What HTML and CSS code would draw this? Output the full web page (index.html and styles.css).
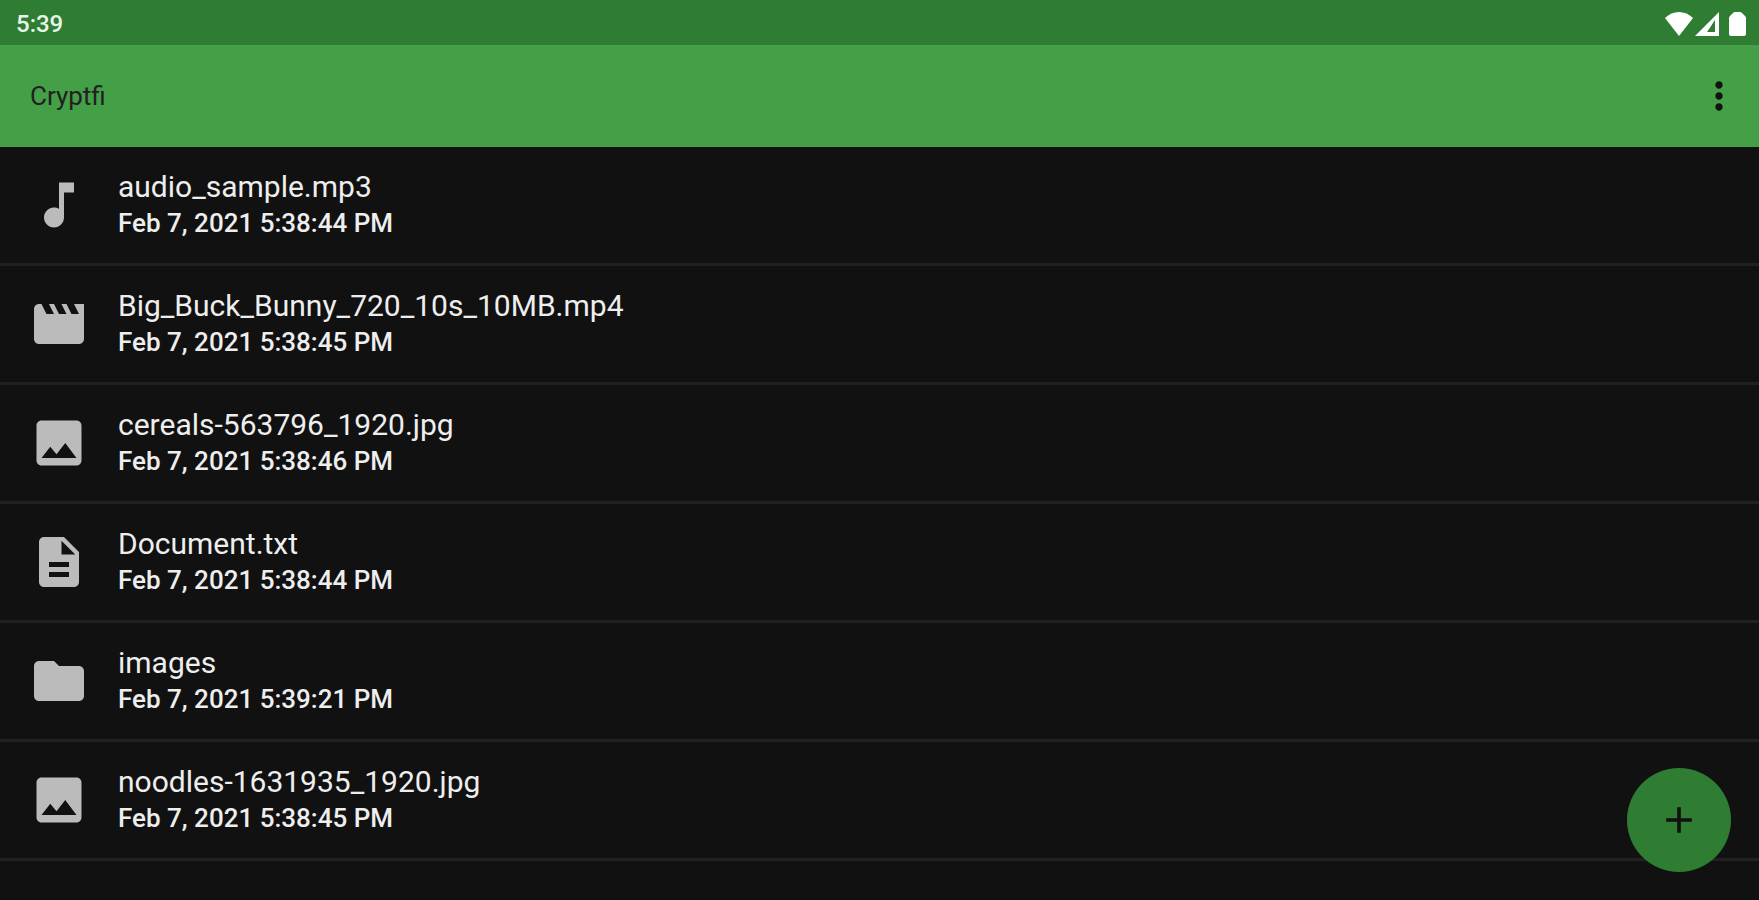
FILE: index.html
```html
<!DOCTYPE html>
<html lang="en">
<head>
    <meta charset="UTF-8">
    <meta name="viewport" content="width=device-width, initial-scale=1.0">
    <title>Cryptfi</title>
    <link rel="stylesheet" href="styles.css">
</head>
<body>
    <div class="status-bar">
        <span class="clock">5:39</span>
        <div class="status-icons">
            <svg class="wifi" viewBox="0 0 28 24"><path d="M14 24 0 6C8-2 20-2 28 6z"/></svg>
            <svg class="signal" viewBox="0 0 24 24"><path fill-rule="evenodd" d="M24 0v24H0zM20 8l-8 12h8z"/></svg>
            <svg class="battery" viewBox="0 0 17 24"><path d="M6 0h5q1 0 2 1l3 3q1 1 1 2v16q0 2-2 2H2q-2 0-2-2V6q0-1 1-2l3-3q1-1 2-1z"/></svg>
        </div>
    </div>

    <header class="app-bar">
        <h1>Cryptfi</h1>
        <button type="button" class="menu-button" aria-label="More options">
            <svg viewBox="0 0 24 24"><path d="M12 8c1.1 0 2-.9 2-2s-.9-2-2-2-2 .9-2 2 .9 2 2 2zm0 2c-1.1 0-2 .9-2 2s.9 2 2 2 2-.9 2-2-.9-2-2-2zm0 6c-1.1 0-2 .9-2 2s.9 2 2 2 2-.9 2-2-.9-2-2-2z"/></svg>
        </button>
    </header>

    <ul class="file-list">
        <li>
            <svg viewBox="0 0 24 24"><path d="M12 3v10.55c-.59-.34-1.27-.55-2-.55-2.21 0-4 1.79-4 4s1.79 4 4 4 4-1.79 4-4V7h4V3h-6z"/></svg>
            <div class="file-info">
                <span class="file-name">audio_sample.mp3</span>
                <span class="file-date">Feb 7, 2021 5:38:44 PM</span>
            </div>
        </li>
        <li>
            <svg viewBox="0 0 24 24"><path d="M18 4l2 4h-3l-2-4h-2l2 4h-3l-2-4H8l2 4H7L5 4H4c-1.1 0-1.99.9-1.99 2L2 18c0 1.1.9 2 2 2h16c1.1 0 2-.9 2-2V4h-4z"/></svg>
            <div class="file-info">
                <span class="file-name">Big_Buck_Bunny_720_10s_10MB.mp4</span>
                <span class="file-date">Feb 7, 2021 5:38:45 PM</span>
            </div>
        </li>
        <li>
            <svg viewBox="0 0 24 24"><path d="M21 19V5c0-1.1-.9-2-2-2H5c-1.1 0-2 .9-2 2v14c0 1.1.9 2 2 2h14c1.1 0 2-.9 2-2zM8.5 13.5l2.5 3.01L14.5 12l4.5 6H5l3.5-4.5z"/></svg>
            <div class="file-info">
                <span class="file-name">cereals-563796_1920.jpg</span>
                <span class="file-date">Feb 7, 2021 5:38:46 PM</span>
            </div>
        </li>
        <li>
            <svg viewBox="0 0 24 24"><path d="M14 2H6c-1.1 0-1.99.9-1.99 2L4 20c0 1.1.89 2 1.99 2H18c1.1 0 2-.9 2-2V8l-6-6zm2 16H8v-2h8v2zm0-4H8v-2h8v2zm-3-5V3.5L18.5 9H13z"/></svg>
            <div class="file-info">
                <span class="file-name">Document.txt</span>
                <span class="file-date">Feb 7, 2021 5:38:44 PM</span>
            </div>
        </li>
        <li>
            <svg viewBox="0 0 24 24"><path d="M10 4H4c-1.1 0-1.99.9-1.99 2L2 18c0 1.1.9 2 2 2h16c1.1 0 2-.9 2-2V8c0-1.1-.9-2-2-2h-8l-2-2z"/></svg>
            <div class="file-info">
                <span class="file-name">images</span>
                <span class="file-date">Feb 7, 2021 5:39:21 PM</span>
            </div>
        </li>
        <li>
            <svg viewBox="0 0 24 24"><path d="M21 19V5c0-1.1-.9-2-2-2H5c-1.1 0-2 .9-2 2v14c0 1.1.9 2 2 2h14c1.1 0 2-.9 2-2zM8.5 13.5l2.5 3.01L14.5 12l4.5 6H5l3.5-4.5z"/></svg>
            <div class="file-info">
                <span class="file-name">noodles-1631935_1920.jpg</span>
                <span class="file-date">Feb 7, 2021 5:38:45 PM</span>
            </div>
        </li>
    </ul>

    <button type="button" class="add-button" aria-label="Add file">
        <svg viewBox="0 0 24 24"><path d="M19 13h-6v6h-2v-6H5v-2h6V5h2v6h6v2z"/></svg>
    </button>
</body>
</html>
```
FILE: styles.css
```css
* {
    box-sizing: border-box;
}

body {
    margin: 0;
    font-family: Roboto, sans-serif;
    background-color: #111;
    color: #eee;
}

.status-bar {
    display: flex;
    justify-content: space-between;
    align-items: center;
    height: 45px;
    padding: 2px 13px 0 16px;
    background-color: #2e7d32;
    color: #e8f5e9;
}

.clock {
    font-size: 24px;
    font-weight: 500;
}

.status-icons {
    display: flex;
    fill: #fff;
}

.status-icons svg {
    height: 24px;
}

.wifi {
    width: 28px;
}

.signal {
    width: 24px;
    margin: 0 10px 0 2px;
}

.battery {
    width: 17px;
}

.app-bar {
    display: flex;
    justify-content: space-between;
    align-items: center;
    height: 102px;
    padding: 0 18px 0 30px;
    background-color: #43a047;
    color: #212121;
}

.app-bar h1 {
    margin: 0;
    font-size: 26px;
    font-weight: 400;
}

button {
    display: flex;
    justify-content: center;
    align-items: center;
    padding: 0;
    border: none;
    cursor: pointer;
}

button svg {
    width: 44px;
    height: 44px;
    fill: #111;
}

.menu-button {
    background: none;
}

.file-list {
    list-style-type: none;
    margin: 0;
    padding: 0;
}

.file-list li {
    display: flex;
    align-items: center;
    gap: 29px;
    height: 119px;
    padding: 0 29px;
    border-bottom: 3px solid #212121;
}

.file-list svg {
    width: 60px;
    height: 60px;
    fill: #bbb;
}

.file-info {
    display: flex;
    flex-direction: column;
    line-height: 36px;
}

.file-name {
    font-size: 30px;
}

.file-date {
    font-size: 26px;
    font-weight: 500;
}

.add-button {
    position: fixed;
    right: 28px;
    bottom: 28px;
    width: 104px;
    height: 104px;
    border-radius: 50%;
    background-color: #2e7d32;
}
```
